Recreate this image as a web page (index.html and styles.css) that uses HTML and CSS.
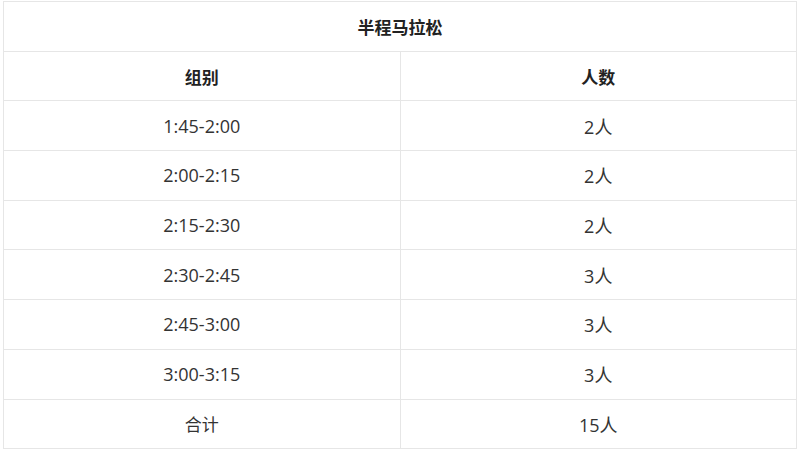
FILE: index.html
```html
<!DOCTYPE html>
<html lang="zh">
<head>
<meta charset="utf-8">
<link rel="stylesheet" href="styles.css">
</head>
<body>
<table class="grid">
  <tr><th class="title" colspan="2">半程马拉松</th></tr>
  <tr><th>组别</th><th>人数</th></tr>
  <tr><td>1:45-2:00</td><td>2人</td></tr>
  <tr><td>2:00-2:15</td><td>2人</td></tr>
  <tr><td>2:15-2:30</td><td>2人</td></tr>
  <tr><td>2:30-2:45</td><td>3人</td></tr>
  <tr><td>2:45-3:00</td><td>3人</td></tr>
  <tr><td>3:00-3:15</td><td>3人</td></tr>
  <tr><td class="cn">合计</td><td>15人</td></tr>
</table>
</body>
</html>
```

FILE: styles.css
```css
html, body {
  margin: 0;
  padding: 0;
  background: #ffffff;
}
body {
  padding: 1px 0 0 3px;
  font-family: "Open Sans", "Noto Sans CJK SC", sans-serif;
  color: #333333;
}
.grid {
  border-collapse: collapse;
  width: 794px;
  table-layout: fixed;
}
.grid th, .grid td {
  border: 1px solid #e6e6e6;
  height: 48.7px;
  padding: 0;
  text-align: center;
  vertical-align: middle;
  font-size: 18px;
}
.grid th {
  font-weight: 700;
  font-size: 17px;
  color: #222222;
}
.grid .cn {
  font-size: 17px;
}
```
